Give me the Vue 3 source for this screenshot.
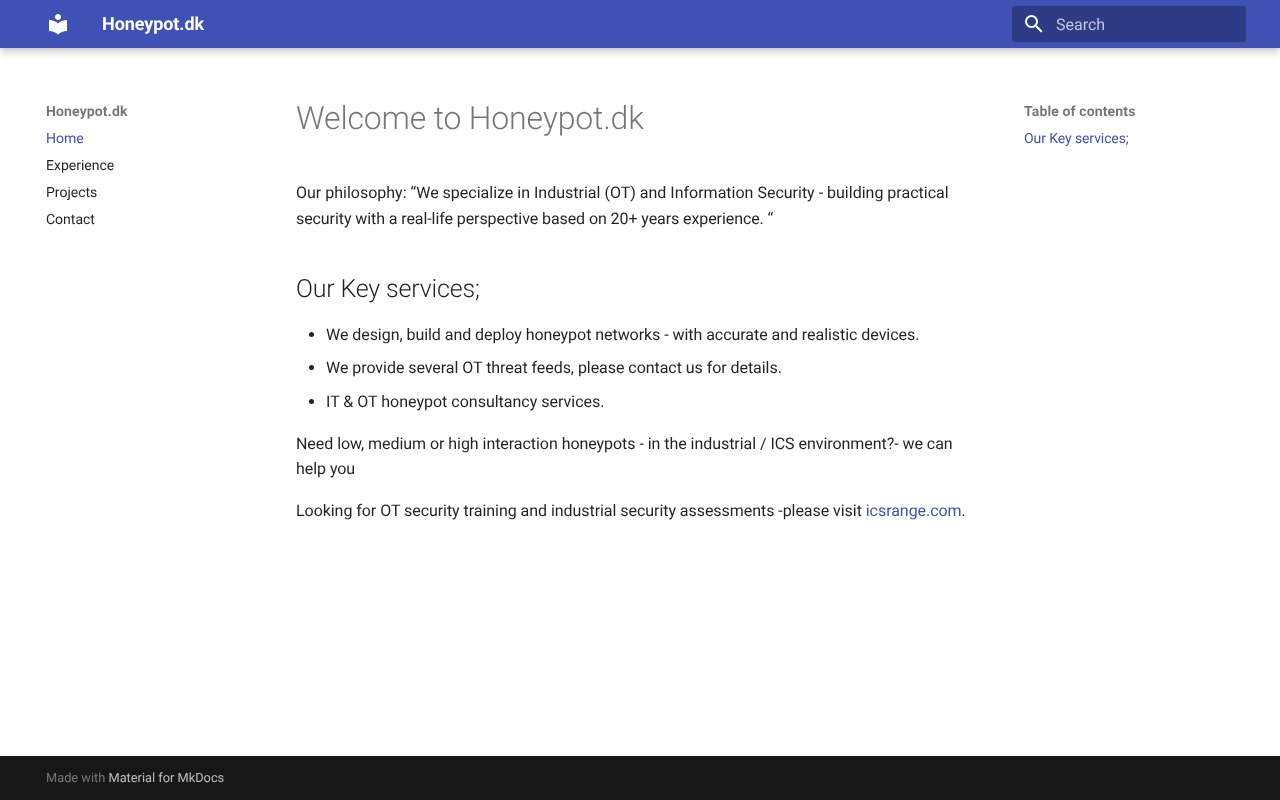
<script setup>
const primary = [
  { label: 'Home', active: true },
  { label: 'Experience' },
  { label: 'Projects' },
  { label: 'Contact' },
]
const services = [
  { text: 'We design, build and deploy honeypot networks - with accurate and realistic devices.', tight: true },
  { text: 'We provide several OT threat feeds, please contact us for details.', tight: true },
  { text: 'IT & OT honeypot consultancy services.', tight: false },
]
</script>

<template>
  <div class="page">
    <header class="header">
      <a class="logo" href="#" aria-label="Honeypot.dk">
        <svg viewBox="0 0 24 24" width="24" height="24"><path fill="#fff" d="M12 11.55C9.64 9.35 6.48 8 3 8v11c3.48 0 6.64 1.35 9 3.55 2.36-2.19 5.52-3.55 9-3.55V8c-3.48 0-6.64 1.35-9 3.55zM12 8c1.66 0 3-1.34 3-3s-1.34-3-3-3-3 1.34-3 3 1.34 3 3 3z"/></svg>
      </a>
      <div class="site-title">Honeypot.dk</div>
      <div class="search">
        <svg viewBox="0 0 24 24" width="24" height="24"><path fill="#fff" d="M9.5 3A6.5 6.5 0 0 1 16 9.5c0 1.61-.59 3.09-1.56 4.23l.27.27h.79l5 5-1.5 1.5-5-5v-.79l-.27-.27A6.516 6.516 0 0 1 9.5 16 6.5 6.5 0 0 1 3 9.5 6.5 6.5 0 0 1 9.5 3m0 2C7 5 5 7 5 9.5S7 14 9.5 14 14 12 14 9.5 12 5 9.5 5z"/></svg>
        <span class="search-text">Search</span>
      </div>
    </header>

    <main class="main">
      <nav class="nav primary">
        <div class="nav-title">Honeypot.dk</div>
        <a v-for="item in primary" :key="item.label" href="#" class="nav-link" :class="{ active: item.active }">{{ item.label }}</a>
      </nav>

      <article class="content">
        <h1>Welcome to Honeypot.dk</h1>
        <p class="philosophy">Our philosophy: “We specialize in Industrial (OT) and Information Security - building practical <span class="tighter">security with a real-life perspective based on 20+ years experience. “</span></p>
        <h2>Our Key services;</h2>
        <ul>
          <li v-for="s in services" :key="s.text" :class="{ tight: s.tight }">{{ s.text }}</li>
        </ul>
        <p class="tight">Need low, medium or high interaction honeypots - in the industrial / ICS environment?- we can help you</p>
        <p class="tight">Looking for OT security training and industrial security assessments -please visit <a href="#">icsrange.com</a>.</p>
      </article>

      <nav class="nav secondary">
        <div class="nav-title">Table of contents</div>
        <a href="#" class="nav-link active toc">Our Key services;</a>
      </nav>
    </main>

    <footer class="footer">
      <span class="made">Made with</span>&nbsp;<a href="#">Material for MkDocs</a>
    </footer>
  </div>
</template>

<style>
html, body { margin: 0; padding: 0; background: #fff; }
</style>

<style scoped>
.page {
  min-height: 800px;
  display: flex;
  flex-direction: column;
  font-family: Roboto, "Helvetica Neue", Arial, sans-serif;
  color: rgba(0, 0, 0, 0.87);
  text-rendering: geometricPrecision;
  will-change: transform;
}
a { text-decoration: none; color: inherit; }

.header {
  height: 48px;
  flex: none;
  box-sizing: border-box;
  display: flex;
  align-items: center;
  padding: 0 34px 0 46px;
  background: #3f51b5;
  color: #fff;
  box-shadow: 0 0 4px rgba(0, 0, 0, 0.1), 0 4px 8px rgba(0, 0, 0, 0.2);
  position: relative;
  z-index: 2;
}
.logo { display: flex; width: 24px; height: 24px; }
.site-title {
  margin-left: 32px;
  padding-top: 1px;
  font-size: 18px;
  font-weight: 700;
  line-height: 47px;
  letter-spacing: -0.08px;
  flex: 1;
}
.search {
  width: 234px;
  height: 36px;
  box-sizing: border-box;
  display: flex;
  align-items: center;
  gap: 8px;
  padding-left: 10px;
  border-radius: 2px;
  background: rgba(0, 0, 0, 0.26);
}
.search-text {
  font-size: 16px;
  color: rgba(255, 255, 255, 0.7);
  margin-left: 2px;
}

.main {
  flex: 1;
  display: flex;
  padding: 0 34px 0 46px;
}
.nav {
  padding-top: 51px;
  font-size: 14px;
  line-height: 18px;
}
.primary { width: 250px; flex: none; }
.secondary { width: 222px; flex: none; }
.nav-title {
  font-weight: 700;
  color: rgba(0, 0, 0, 0.54);
  line-height: 27px;
  height: 27px;
  letter-spacing: 0.13px;
}
.nav-link {
  display: block;
  line-height: 27px;
}
.nav-link.active { color: #3f51b5; }
.toc { letter-spacing: -0.09px; }

.content {
  flex: 1;
  min-width: 0;
  padding-right: 40px;
  padding-top: 50px;
  font-size: 16px;
  line-height: 25.6px;
}
h1 {
  margin: 0;
  font-size: 32px;
  font-weight: 300;
  line-height: 40px;
  letter-spacing: -0.18px;
  color: rgba(0, 0, 0, 0.54);
}
p { margin: 16px 0; }
.philosophy { margin-top: 42.3px; }
.tight { letter-spacing: -0.05px; }
.tighter { letter-spacing: -0.085px; }
h2 {
  margin: 40.3px 0 15px;
  font-size: 25px;
  font-weight: 300;
  line-height: 35px;
  letter-spacing: -0.18px;
}
ul { margin: 15px 0 16px; padding-left: 30px; }
li { margin-bottom: 8px; }
.content a { color: #3f51b5; }

.footer {
  height: 44px;
  flex: none;
  display: flex;
  align-items: center;
  padding-left: 46px;
  background: #171717;
  color: rgba(255, 255, 255, 0.7);
  font-size: 12.8px;
}
.made { color: rgba(255, 255, 255, 0.4); }
</style>
